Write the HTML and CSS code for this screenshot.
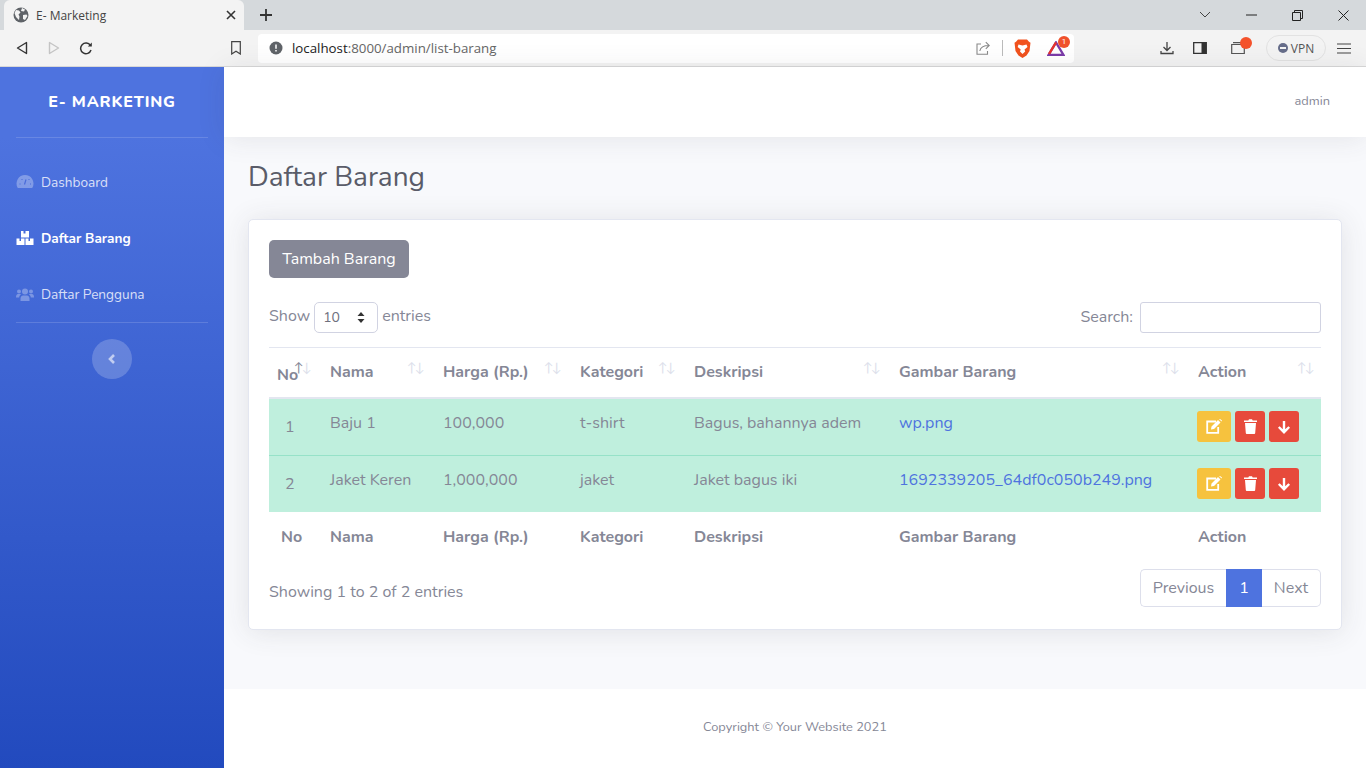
FILE: index.html
```html
<!DOCTYPE html>
<html lang="en">

<head>
    <meta charset="UTF-8">
    <meta name="viewport" content="width=device-width, initial-scale=1.0">
    <title>E- Marketing</title>
    <link rel="stylesheet" href="styles.css">
</head>

<body>
    <!-- browser chrome -->
    <div class="tabstrip">
        <div class="tab">
            <svg class="tab-globe" width="16" height="16" viewBox="0 0 16 16"><circle cx="8" cy="8" r="7.500" fill="#5f6368"/><path d="M3 3l3 .5 1.500 2-2 2 1 2-.5 3.500-3-3-1.500-4zM9 1l3 1.500-1 2-3-.5zM10 8l3.500-.5 1 1.500-2.500 4-2-1z" fill="#f3f3f3"/></svg>
            <span class="tab-title">E- Marketing</span>
            <svg class="tab-close" width="10" height="10" viewBox="0 0 10 10"><path d="M1 1l8 8M9 1l-8 8" stroke="#333" stroke-width="1.600"/></svg>
        </div>
        <svg class="new-tab" width="14" height="14" viewBox="0 0 14 14"><path d="M7 1v12M1 7h12" stroke="#333" stroke-width="1.800"/></svg>
        <div class="window-btns">
            <svg width="12" height="8" viewBox="0 0 12 8"><path d="M1 1l5 5 5-5" fill="none" stroke="#444" stroke-width="1"/></svg>
            <svg width="11" height="2" viewBox="0 0 11 2"><path d="M0 1h11" stroke="#222" stroke-width="1"/></svg>
            <svg width="11" height="11" viewBox="0 0 11 11"><path d="M.5 2.500h8v8h-8zM2.500 2.500v-2h8v8h-2" fill="none" stroke="#222" stroke-width="1"/></svg>
            <svg width="11" height="11" viewBox="0 0 11 11"><path d="M.5.5l10 10M10.500.5l-10 10" stroke="#222" stroke-width="1"/></svg>
        </div>
    </div>
    <div class="toolbar">
        <svg class="tool-back" width="12" height="14" viewBox="0 0 12 14"><path d="M10.500 1.500v11L1.500 7z" fill="none" stroke="#333" stroke-width="1.400" stroke-linejoin="round"/></svg>
        <svg class="tool-forward" width="12" height="14" viewBox="0 0 12 14"><path d="M1.500 1.500v11l9-5.500z" fill="none" stroke="#c4c4c4" stroke-width="1.400" stroke-linejoin="round"/></svg>
        <svg class="tool-reload" width="14" height="14" viewBox="0 0 14 14"><path d="M12 9a5.300 5.300 0 1 1-.6-4.500" fill="none" stroke="#333" stroke-width="1.500"/><path d="M12.800 1.500v4h-4z" fill="#333"/></svg>
        <svg class="tool-bookmark" width="10" height="14" viewBox="0 0 10 14"><path d="M.7.7h8.600v12.300L5 10.200.7 13z" fill="none" stroke="#444" stroke-width="1.200"/></svg>
        <div class="urlbar">
            <svg class="url-info" width="14" height="14" viewBox="0 0 14 14"><circle cx="7" cy="7" r="6.500" fill="#5f6368"/><path d="M7 3.500v4.200M7 9v1.500" stroke="#fff" stroke-width="1.500"/></svg>
            <span class="url-text">localhost<span class="url-rest">:8000/admin/list-barang</span></span>
            <svg class="url-share" width="14" height="14" viewBox="0 0 14 14"><path d="M5 3H1v10.300h10.500V10" fill="none" stroke="#8a8a8a" stroke-width="1.100"/><path d="M3.800 10c.7-3.500 3.700-5.500 9-5.500M9.800 1.200l3.400 3.300-3.400 3.300" fill="none" stroke="#8a8a8a" stroke-width="1.100"/></svg>
            <span class="url-sep"></span>
            <svg class="url-brave" width="17" height="19" viewBox="0 0 17 19"><path d="M4 .5h9l2 2.200 1.500 1-1 8.300-3 4.500-4 2.500-4-2.500-3-4.500-1-8.300 1.500-1z" fill="#f1521e"/><path d="M4.500 5.500l4 1 4-1 1 2.500-3 2.500.7 2L8.500 15 6 12.500l.7-2-3-2.500z" fill="#fff"/></svg>
            <span class="url-rewards">
                <svg width="18" height="15" viewBox="0 0 18 15"><path d="M9 1.500L16.500 14h-15z" fill="none" stroke="#7b3ba8" stroke-width="2.400"/><path d="M9 1.500L2 13" stroke="#e8352c" stroke-width="2.400"/></svg>
                <span class="rewards-badge">1</span>
            </span>
        </div>
        <svg class="tool-download" width="14" height="14" viewBox="0 0 14 14"><path d="M7 1v8M3.500 6L7 9.500 10.500 6M1 10v2.500h12V10" fill="none" stroke="#444" stroke-width="1.300"/></svg>
        <svg class="tool-panel" width="14" height="12" viewBox="0 0 14 12"><path d="M.7.7h12.600v10.600H.7z" fill="none" stroke="#333" stroke-width="1.300"/><path d="M8.500 1h4.500v10H8.500z" fill="#333"/></svg>
        <span class="tool-wallet">
            <svg width="14" height="12" viewBox="0 0 14 12"><path d="M.7 2.500h12.600v9H.7zM2 .7h9" fill="none" stroke="#555" stroke-width="1.200"/></svg>
            <span class="wallet-dot"></span>
        </span>
        <span class="vpn"><span class="vpn-dot"></span>VPN</span>
        <svg class="tool-menu" width="14" height="11" viewBox="0 0 14 11"><path d="M0 1h14M0 5.500h14M0 10h14" stroke="#444" stroke-width="1.200"/></svg>
    </div>

    <div class="app">
        <aside class="sidebar">
            <div class="brand">E- Marketing</div>
            <hr class="side-divider">
            <ul class="side-nav">
                <li class="side-item">
                    <svg class="side-icon" width="17" height="14" viewBox="0 0 17 14"><path d="M8.500 0a8.500 8.500 0 0 1 7.500 12.500 1 1 0 0 1-.9.500H1.900a1 1 0 0 1-.9-.500A8.500 8.500 0 0 1 8.500 0z" fill="currentColor"/><path d="M8 9.500l1.500-5M3 9h1M5 4.500h1M12 4.500h1M13.500 9h1" stroke="#4a6cd9" stroke-width="1.200"/></svg>
                    Dashboard
                </li>
                <li class="side-item active">
                    <svg class="side-icon" width="17" height="14" viewBox="0 0 17 14"><path d="M4.500 0h2.500v2.500h2V0h3.500v6.500h-8zM0 7.500h3v2.500h1.500V7.500h3.500V14H0zM9 7.500h3v2.500h1.500V7.500H17V14H9z" fill="currentColor"/></svg>
                    Daftar Barang
                </li>
                <li class="side-item">
                    <svg class="side-icon" width="18" height="13" viewBox="0 0 18 13"><circle cx="3" cy="3.500" r="2" fill="currentColor"/><circle cx="15" cy="3.500" r="2" fill="currentColor"/><circle cx="9" cy="3.500" r="3" fill="currentColor"/><path d="M4.500 13v-2.500C4.500 8.500 6 7.500 7 7.500h4c1 0 2.500 1 2.500 3V13zM0 9c0-2 1-3 2-3h2c.5 0 1 .3 1 .5C4 7.200 3.200 8.200 3.200 9.500H0zM18 9c0-2-1-3-2-3h-2c-.5 0-1 .3-1 .5 1 .7 1.800 1.700 1.800 3H18z" fill="currentColor"/></svg>
                    Daftar Pengguna
                </li>
            </ul>
            <hr class="side-divider">
            <div class="side-toggle">
                <svg width="8" height="10" viewBox="0 0 8 10"><path d="M6 1L2 5l4 4" fill="none" stroke="currentColor" stroke-width="2.600"/></svg>
            </div>
        </aside>

        <div class="main">
            <header class="topbar">admin</header>
            <section class="content">
                <h1 class="page-title">Daftar Barang</h1>
                <div class="card">
                    <button class="btn-add">Tambah Barang</button>
                    <div class="table-controls">
                        <label class="entries">Show
                            <span class="fake-select">10
                                <svg width="8" height="11" viewBox="0 0 8 11"><path d="M4 0l3.500 4h-7zM4 11L.5 7h7z" fill="#333"/></svg>
                            </span>
                            entries</label>
                        <label class="search">Search: <input type="text" class="search-input"></label>
                    </div>
                    <table class="data-table">
                        <colgroup>
                            <col class="col-no">
                            <col class="col-nama">
                            <col class="col-harga">
                            <col class="col-kategori">
                            <col class="col-deskripsi">
                            <col class="col-gambar">
                            <col class="col-action">
                        </colgroup>
                        <thead>
                            <tr>
                                <th class="th-no">No<span class="sort"><i class="up">↑</i><i>↓</i></span></th>
                                <th>Nama<span class="sort"><i>↑</i><i>↓</i></span></th>
                                <th>Harga (Rp.)<span class="sort"><i>↑</i><i>↓</i></span></th>
                                <th>Kategori<span class="sort"><i>↑</i><i>↓</i></span></th>
                                <th>Deskripsi<span class="sort"><i>↑</i><i>↓</i></span></th>
                                <th>Gambar Barang<span class="sort"><i>↑</i><i>↓</i></span></th>
                                <th>Action<span class="sort sort-last"><i>↑</i><i>↓</i></span></th>
                            </tr>
                        </thead>
                        <tbody>
                            <tr>
                                <td class="td-no">1</td>
                                <td>Baju 1</td>
                                <td>100,000</td>
                                <td>t-shirt</td>
                                <td>Bagus, bahannya adem</td>
                                <td><a href="#">wp.png</a></td>
                                <td class="td-action">
                                    <span class="act act-edit"><svg width="16" height="15" viewBox="0 0 16 15"><path d="M10 2.500H1.200v11.300h11V8" fill="none" stroke="#fff" stroke-width="1.800"/><path d="M5.500 7.500L12 1l2.500 2.500L8 10l-3 .5zM13 0l2.500 2.500 .5-1L14 0z" fill="#fff"/></svg></span>
                                    <span class="act act-red"><svg width="13" height="15" viewBox="0 0 13 15"><path d="M0 1.500h4.300L5 .3h3l.7 1.200H13v1.500H0zM1 4h11l-.8 10a1 1 0 0 1-1 1H2.800a1 1 0 0 1-1-1z" fill="#fff"/></svg></span>
                                    <span class="act act-red"><svg width="14" height="14" viewBox="0 0 14 14"><path d="M7 1v11M1.800 7L7 12.200 12.200 7" fill="none" stroke="#fff" stroke-width="2.400"/></svg></span>
                                </td>
                            </tr>
                            <tr>
                                <td class="td-no">2</td>
                                <td>Jaket Keren</td>
                                <td>1,000,000</td>
                                <td>jaket</td>
                                <td>Jaket bagus iki</td>
                                <td><a href="#">1692339205_64df0c050b249.png</a></td>
                                <td class="td-action">
                                    <span class="act act-edit"><svg width="16" height="15" viewBox="0 0 16 15"><path d="M10 2.500H1.200v11.300h11V8" fill="none" stroke="#fff" stroke-width="1.800"/><path d="M5.500 7.500L12 1l2.500 2.500L8 10l-3 .5zM13 0l2.500 2.500 .5-1L14 0z" fill="#fff"/></svg></span>
                                    <span class="act act-red"><svg width="13" height="15" viewBox="0 0 13 15"><path d="M0 1.500h4.300L5 .3h3l.7 1.200H13v1.500H0zM1 4h11l-.8 10a1 1 0 0 1-1 1H2.800a1 1 0 0 1-1-1z" fill="#fff"/></svg></span>
                                    <span class="act act-red"><svg width="14" height="14" viewBox="0 0 14 14"><path d="M7 1v11M1.800 7L7 12.200 12.200 7" fill="none" stroke="#fff" stroke-width="2.400"/></svg></span>
                                </td>
                            </tr>
                        </tbody>
                        <tfoot>
                            <tr>
                                <th class="tf-no">No</th>
                                <th>Nama</th>
                                <th>Harga (Rp.)</th>
                                <th>Kategori</th>
                                <th>Deskripsi</th>
                                <th>Gambar Barang</th>
                                <th>Action</th>
                            </tr>
                        </tfoot>
                    </table>
                    <div class="table-info">
                        <div class="info-text">Showing 1 to 2 of 2 entries</div>
                        <div class="pagination">
                            <span class="page-link first">Previous</span>
                            <span class="page-link current">1</span>
                            <span class="page-link last">Next</span>
                        </div>
                    </div>
                </div>
            </section>
            <footer class="footer">Copyright © Your Website 2021</footer>
        </div>
    </div>
</body>

</html>
```

FILE: styles.css
```css
html,
body {
    height: 100%;
}

body {
    margin: 0;
    height: 768px;
    overflow: hidden;
    display: flex;
    flex-direction: column;
    font-family: 'Nunito', 'Lato', 'Noto Sans', sans-serif;
    font-size: 16px;
    color: #858796;
    background-color: #f8f9fc;
}

/* browser chrome */
.tabstrip {
    height: 30px;
    flex: none;
    display: flex;
    align-items: center;
    background-color: #d5d9dc;
}

.tab {
    width: 240px;
    height: 30px;
    margin-left: 4px;
    padding: 0 4px 0 9px;
    box-sizing: border-box;
    display: flex;
    align-items: center;
    background-color: #f3f3f3;
    border-radius: 6px 6px 0 0;
}

.tab-title {
    flex: 1;
    margin-left: 7px;
    font-family: 'Open Sans', sans-serif;
    font-size: 12px;
    color: #444;
}

.tab-close {
    margin-right: 4px;
}

.new-tab {
    margin-left: 15px;
}

.window-btns {
    margin-left: auto;
    display: grid;
    grid-template-columns: repeat(4, 46px);
    align-items: center;
    justify-items: center;
}

.toolbar {
    height: 36px;
    flex: none;
    display: flex;
    align-items: center;
    background-color: #f3f3f3;
    border-bottom: 1px solid #d8d8d8;
}

.tool-back {
    margin-left: 16px;
}

.tool-forward {
    margin-left: 20px;
}

.tool-reload {
    margin-left: 19px;
}

.tool-bookmark {
    margin-left: 138px;
}

.urlbar {
    width: 816px;
    height: 29px;
    margin-left: 17px;
    box-sizing: border-box;
    padding: 0 9px 0 11px;
    display: flex;
    align-items: center;
    background-color: #fff;
    border-radius: 4px;
}

.url-text {
    flex: 1;
    margin-left: 9px;
    font-family: 'Open Sans', sans-serif;
    font-size: 13.300px;
    color: #222;
}

.url-rest {
    color: #666;
}

.url-share {
    margin-right: 12px;
}

.url-sep {
    width: 1px;
    height: 16px;
    margin-right: 11px;
    background-color: #bbb;
}

.url-brave {
    margin-right: 16px;
}

.url-rewards {
    position: relative;
    display: flex;
}

.rewards-badge {
    position: absolute;
    top: -5px;
    right: -5px;
    width: 12px;
    height: 12px;
    border-radius: 50%;
    background-color: #f0512c;
    color: #fff;
    font-family: 'Roboto', sans-serif;
    font-size: 8px;
    line-height: 12px;
    text-align: center;
}

.tool-download {
    margin-left: 86px;
}

.tool-panel {
    margin-left: 19px;
}

.tool-wallet {
    position: relative;
    display: flex;
    margin-left: 24px;
}

.wallet-dot {
    position: absolute;
    top: -5px;
    right: -7px;
    width: 12px;
    height: 12px;
    border-radius: 50%;
    background-color: #f4522b;
}

.vpn {
    width: 60px;
    height: 26px;
    margin-left: 21px;
    box-sizing: border-box;
    display: flex;
    align-items: center;
    justify-content: center;
    border: 1px solid #e2e2e2;
    border-radius: 13px;
    font-family: 'Open Sans', sans-serif;
    font-size: 12px;
    color: #555;
}

.vpn-dot {
    position: relative;
    width: 10px;
    height: 10px;
    margin-right: 3px;
    border-radius: 50%;
    background-color: #666d8a;
}

.vpn-dot::after {
    content: "";
    position: absolute;
    left: 2px;
    right: 2px;
    top: 4px;
    height: 2px;
    background-color: #f3f3f3;
}

.tool-menu {
    margin-left: 11px;
}

/* app */
.app {
    flex: 1;
    display: flex;
    min-height: 0;
}

.sidebar {
    width: 224px;
    flex: none;
    padding: 0 16px;
    box-sizing: border-box;
    background-color: #4e73df;
    background-image: linear-gradient(180deg, #4e73df 10%, #224abe 100%);
}

.brand {
    height: 70px;
    line-height: 70px;
    text-align: center;
    font-size: 16px;
    font-weight: 800;
    letter-spacing: 0.8px;
    text-transform: uppercase;
    color: #fff;
}

.side-divider {
    margin: 0;
    border: 0;
    border-top: 1px solid rgba(255, 255, 255, 0.15);
}

.side-nav {
    list-style: none;
    margin: 16px 0 0;
    padding: 0;
}

.side-item {
    height: 56px;
    display: flex;
    align-items: center;
    font-size: 13.600px;
    color: rgba(255, 255, 255, 0.8);
}

.side-item.active {
    color: #fff;
    font-weight: 700;
}

.side-item:not(.active) .side-icon {
    color: rgba(255, 255, 255, 0.3);
}

.side-icon {
    width: 18px;
    margin-right: 7px;
    flex: none;
}

.side-toggle {
    width: 40px;
    height: 40px;
    margin: 16px auto 0;
    display: flex;
    align-items: center;
    justify-content: center;
    border-radius: 50%;
    background-color: rgba(255, 255, 255, 0.2);
    color: rgba(255, 255, 255, 0.6);
}

.main {
    flex: 1;
    display: flex;
    flex-direction: column;
    min-width: 0;
}

.topbar {
    height: 70px;
    flex: none;
    padding: 0 36px 2px 0;
    box-sizing: border-box;
    display: flex;
    align-items: center;
    justify-content: flex-end;
    font-size: 12.800px;
    color: #858796;
    background-color: #fff;
    box-shadow: 0 2px 28px rgba(58, 59, 69, 0.1);
    position: relative;
}

.content {
    flex: 1;
    padding: 23px 24px 0;
}

.page-title {
    margin: 0 0 25px;
    font-size: 28px;
    font-weight: 400;
    line-height: 34px;
    color: #5a5c69;
}

.card {
    padding: 20px;
    height: 411px;
    box-sizing: border-box;
    background-color: #fff;
    border: 1px solid #e3e6f0;
    border-radius: 5px;
    box-shadow: 0 2px 28px rgba(58, 59, 69, 0.12);
}

.btn-add {
    display: block;
    width: 140px;
    height: 38px;
    padding: 0;
    border: none;
    border-radius: 5px;
    font-family: inherit;
    font-size: 16px;
    color: #fff;
    background-color: #858796;
}

.table-controls {
    margin-top: 24px;
    height: 45px;
    display: flex;
    justify-content: space-between;
    align-items: flex-start;
}

.entries,
.search {
    display: flex;
    align-items: flex-start;
    height: 31px;
    line-height: 29px;
}

.search {
    line-height: 31px;
}

.fake-select {
    width: 64px;
    height: 31px;
    margin: 0 4px;
    padding: 0 12px 0 8px;
    box-sizing: border-box;
    display: flex;
    align-items: center;
    justify-content: space-between;
    font-size: 14px;
    color: #6e707e;
    border: 1px solid #d1d3e2;
    border-radius: 5px;
    background-color: #fff;
}

.search-input {
    width: 181px;
    height: 31px;
    margin: 0 0 0 7px;
    box-sizing: border-box;
    border: 1px solid #d1d3e2;
    border-radius: 3px;
}

.data-table {
    width: 1052px;
    table-layout: fixed;
    border-collapse: collapse;
}

.col-no { width: 53px; }
.col-nama { width: 113px; }
.col-harga { width: 137px; }
.col-kategori { width: 114px; }
.col-deskripsi { width: 205px; }
.col-gambar { width: 299px; }
.col-action { width: 131px; }

.data-table th {
    position: relative;
    padding: 0 8px;
    text-align: left;
    font-weight: 700;
    color: #858796;
}

.data-table thead th {
    height: 50px;
    padding-bottom: 0;
    box-sizing: border-box;
    border-top: 1px solid #e3e6f0;
    border-bottom: 2px solid #e3e6f0;
}

.data-table .th-no {
    padding-top: 6px;
}

.data-table tfoot th {
    height: 47px;
    padding-top: 2px;
}

.data-table tfoot .tf-no {
    padding-left: 12px;
}

.sort {
    position: absolute;
    top: 11px;
    right: 12px;
    font-size: 13px;
    font-weight: 400;
    line-height: 18px;
    color: #dddfeb;
    white-space: nowrap;
}

.sort-last {
    right: 8px;
}

.sort i {
    display: inline-block;
    width: 8px;
    text-align: center;
    font-style: normal;
}

.sort .up {
    color: #858796;
}

.data-table tbody td {
    height: 58px;
    padding: 0 8px 7px;
    box-sizing: border-box;
    background-color: #bfefdd;
    border-top: 1px solid #96e2c8;
    color: #858796;
    white-space: nowrap;
}

.data-table tbody tr:last-child td {
    height: 56px;
    padding-bottom: 8px;
}

.data-table a {
    color: #4e73df;
    text-decoration: none;
}

.data-table .td-no,
.data-table tbody tr:last-child .td-no {
    padding: 1px 0 0 16px;
}

.data-table .td-action,
.data-table tbody tr:last-child .td-action {
    padding: 0 0 0 7px;
    font-size: 0;
}

.act {
    display: inline-flex;
    align-items: center;
    justify-content: center;
    height: 31px;
    width: 30px;
    margin-right: 4px;
    border-radius: 3px;
    vertical-align: middle;
}

.act-edit {
    width: 34px;
    background-color: #f6c23e;
}

.act-red {
    background-color: #e74a3b;
}

.table-info {
    display: flex;
    justify-content: space-between;
    align-items: center;
    margin-top: 8px;
}

.info-text {
    padding-top: 8px;
}

.pagination {
    display: flex;
    height: 38px;
    box-sizing: border-box;
}

.page-link {
    height: 38px;
    box-sizing: border-box;
    display: flex;
    align-items: center;
    justify-content: center;
    border: 1px solid #dddfeb;
    background-color: #fff;
}

.first {
    width: 86px;
    border-radius: 5px 0 0 5px;
    border-right: none;
}

.current {
    width: 36px;
    color: #fff;
    border-color: #4e73df;
    background-color: #4e73df;
}

.last {
    width: 59px;
    border-left: none;
    border-radius: 0 5px 5px 0;
}

.footer {
    height: 79px;
    flex: none;
    padding-bottom: 4px;
    box-sizing: border-box;
    display: flex;
    align-items: center;
    justify-content: center;
    font-size: 12.800px;
    color: #858796;
    background-color: #fff;
}
```
